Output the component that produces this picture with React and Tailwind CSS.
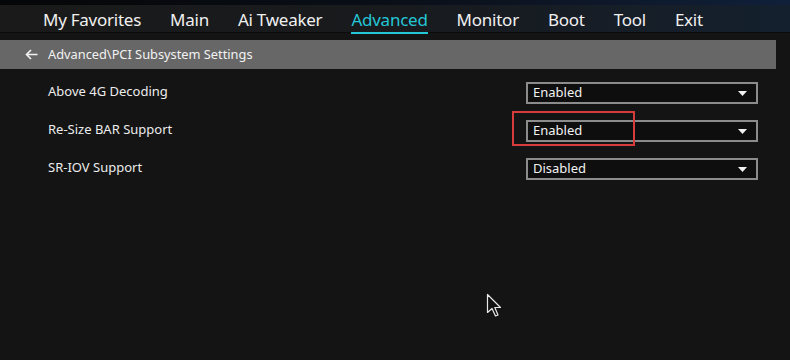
import React from 'react';

const tabs = ['My Favorites', 'Main', 'Ai Tweaker', 'Advanced', 'Monitor', 'Boot', 'Tool', 'Exit'];

const items = [
  { label: 'Above 4G Decoding', value: 'Enabled' },
  { label: 'Re-Size BAR Support', value: 'Enabled', marked: true },
  { label: 'SR-IOV Support', value: 'Disabled' },
];

const Caret = () => (
  <svg width="9" height="5" viewBox="0 0 9 5" className="shrink-0">
    <path d="M0 0 H9 L4.5 5 Z" fill="#f2f2f2" />
  </svg>
);

const App = () => {
  return (
    <div
      className="relative w-[790px] h-[360px] overflow-hidden bg-[#141414] text-[#ececec]"
      style={{ fontFamily: '"Noto Sans", "Open Sans", sans-serif' }}
    >
      {/* Top tabs */}
      <div className="h-[5px] bg-gradient-to-r from-[#050607] via-[#0a0f18] to-[#10203a]" />
      <div className="h-[28px] bg-gradient-to-r from-[#1a1a1a] via-[#181a1d] to-[#14202e] border-b border-[#0b0b0b] flex items-center pl-[43px]">
        {tabs.map((t) => (
          <div key={t} className="mr-[29px] relative">
            <span
              className={`block text-[17px] leading-[24px] tracking-[-0.25px] translate-y-[1px] ${
                t === 'Advanced' ? 'text-[#25c6d6]' : 'text-[#f0f0f0]'
              }`}
            >
              {t}
            </span>
            {t === 'Advanced' && (
              <div className="absolute left-0 right-0 -bottom-[3px] h-[2px] bg-[#25c6d6]" />
            )}
          </div>
        ))}
      </div>

      {/* Breadcrumb */}
      <div className="mt-[7px] mr-[14px] h-[29px] bg-[#676767] flex items-center pl-[25px] gap-[10px]">
        <svg width="13" height="11" viewBox="0 0 13 11">
          <path d="M12.5 5.5 H2 M6 1 L1.5 5.5 L6 10" stroke="#f2f2f2" strokeWidth="1.6" fill="none" />
        </svg>
        <span className="text-[12.8px] text-[#f2f2f2]">Advanced\PCI Subsystem Settings</span>
      </div>

      {/* Settings rows */}
      <div className="pt-[13px] flex flex-col gap-[16px]">
        {items.map((it) => (
          <div key={it.label} className="h-[22px] flex items-center pl-[48px] pr-[32px]">
            <span className="text-[13px] flex-1 -translate-y-[1px]">{it.label}</span>
            <div className="relative w-[232px] h-[22px] border-2 border-[#8c8c8c] bg-[#0e0e0e] flex items-center justify-between pl-[5px] pr-[9px]">
              <span className="text-[13px] text-[#f2f2f2]">{it.value}</span>
              <Caret />
              {it.marked && (
                <div className="absolute -left-[16px] -top-[11px] w-[123px] h-[35px] border-2 border-[#d63c3c]" />
              )}
            </div>
          </div>
        ))}
      </div>

      {/* Mouse pointer */}
      <svg className="absolute left-[486px] top-[293px]" width="16" height="26" viewBox="0 0 16 26">
        <path
          d="M1.5 1.5 V19.5 L6 15.5 L9.5 23 L12 22 L8.8 14.5 H14.5 Z"
          fill="#111"
          stroke="#e8e8e8"
          strokeWidth="1.2"
          strokeLinejoin="round"
        />
      </svg>
    </div>
  );
};

export default App;
